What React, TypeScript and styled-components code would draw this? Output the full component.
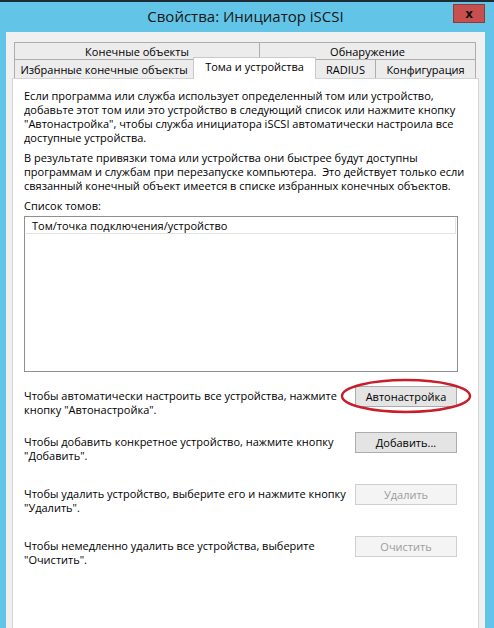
import React from "react";
import styled, { createGlobalStyle } from "styled-components";

const Global = createGlobalStyle`
  html, body { margin: 0; padding: 0; }
  body {
    background: #62c5e8;
    font-family: "Open Sans", "Noto Sans", "Liberation Sans", sans-serif;
    color: #000;
  }
`;

const Window = styled.div`
  width: 494px;
  height: 628px;
  background: #62c5e8;
  border-top: 2px solid #1c2b36;
  box-sizing: border-box;
  display: flex;
  flex-direction: column;
  overflow: hidden;
`;

const TitleBar = styled.div`
  height: 30px;
  display: grid;
  grid-template-columns: 6px 1fr 9px;
  position: relative;
`;

const Title = styled.div`
  grid-column: 2;
  display: flex;
  align-items: center;
  justify-content: center;
  font-size: 15px;
  color: #151515;
  padding-bottom: 2px;
`;

const CloseButton = styled.div`
  position: absolute;
  right: 9px;
  top: 2px;
  width: 32px;
  height: 19px;
  background: #c7504f;
  border: 1px solid #8e3a3a;
  box-sizing: border-box;
  display: flex;
  align-items: center;
  justify-content: center;
  font-family: "DejaVu Sans", sans-serif;
  font-weight: bold;
  font-size: 12px;
  color: #111;
`;

const Client = styled.div`
  flex: 1;
  margin: 0 9px 0 6px;
  background: #f0f0f0;
  padding: 10px 6px 0 6px;
  display: flex;
  flex-direction: column;
`;

const TabStrip = styled.div`
  margin: 0 3px 0 2px;
  display: flex;
  flex-direction: column;
`;

const TabRow = styled.div<{ $h: number }>`
  display: flex;
  height: ${(p) => p.$h}px;
`;

const Tab = styled.div<{ $w: number; $active?: boolean }>`
  width: ${(p) => p.$w}px;
  box-sizing: border-box;
  border: 1px solid #adadad;
  border-left-width: 0;
  &:first-child { border-left-width: 1px; }
  border-bottom: none;
  background: ${(p) => (p.$active ? "#ffffff" : "#ececec")};
  font-size: 11px;
  display: flex;
  align-items: center;
  justify-content: center;
  white-space: nowrap;
  ${(p) =>
    p.$active
      ? `
    margin-top: -2px;
    height: calc(100% + 3px);
    border-left-width: 1px;
    border-color: #c9c9c9;
    margin-left: -1px;
    width: ${p.$w + 1}px;
    position: relative;
    z-index: 2;
    padding-bottom: 4px;
  `
      : ""}
`;

const Panel = styled.div`
  flex: 1;
  background: #ffffff;
  border: 1px solid #d4d4d4;
  border-bottom: none;
  padding: 10px 20px 0 11px;
  font-size: 11px;
  line-height: 14px;
  position: relative;
  z-index: 1;
`;

const Para = styled.p<{ $mt?: number }>`
  margin: ${(p) => p.$mt ?? 0}px 0 0 0;
  white-space: nowrap;
`;

const ListBox = styled.div`
  margin-top: 3px;
  height: 156px;
  border: 1px solid #8f8f8f;
  box-sizing: border-box;
  padding: 1px;
`;

const ListHeader = styled.div`
  height: 16px;
  border: 1px solid #e3e3e3;
  border-top: none;
  border-left: none;
  box-sizing: border-box;
  padding-left: 6px;
  display: flex;
  align-items: center;
  background: #fff;
`;

const ActionRow = styled.div<{ $mt: number }>`
  margin-top: ${(p) => p.$mt}px;
  display: flex;
  justify-content: space-between;
  align-items: flex-start;
`;

const ActionText = styled.div`
  padding-top: 3px;
  line-height: 14px;
  white-space: nowrap;
`;

const ButtonWrap = styled.div`
  position: relative;
  margin-right: 1px;
`;

const Button = styled.div<{ $disabled?: boolean }>`
  width: 102px;
  height: 21px;
  box-sizing: border-box;
  border: 1px solid ${(p) => (p.$disabled ? "#cfcfcf" : "#acacac")};
  background: ${(p) => (p.$disabled ? "#f4f4f4" : "#e4e4e4")};
  color: ${(p) => (p.$disabled ? "#9c9c9c" : "#000")};
  display: flex;
  align-items: center;
  justify-content: center;
  font-size: 11px;
`;

const Ellipse = styled.svg`
  position: absolute;
  left: -16px;
  top: -9px;
  pointer-events: none;
`;

export default function App() {
  return (
    <>
      <Global />
      <Window>
        <TitleBar>
          <Title>Свойства: Инициатор iSCSI</Title>
          <CloseButton>x</CloseButton>
        </TitleBar>
        <Client>
          <TabStrip>
            <TabRow $h={17}>
              <Tab $w={246}>Конечные объекты</Tab>
              <Tab $w={216}>Обнаружение</Tab>
            </TabRow>
            <TabRow $h={19}>
              <Tab $w={180}>Избранные конечные объекты</Tab>
              <Tab $w={122} $active>
                Тома и устройства
              </Tab>
              <Tab $w={60}>RADIUS</Tab>
              <Tab $w={100}>Конфигурация</Tab>
            </TabRow>
          </TabStrip>
          <Panel>
            <Para>
              Если программа или служба использует определенный том или устройство,
              <br />
              добавьте этот том или это устройство в следующий список или нажмите кнопку
              <br />
              "Автонастройка", чтобы служба инициатора iSCSI автоматически настроила все
              <br />
              доступные устройства.
            </Para>
            <Para $mt={6}>
              В результате привязки тома или устройства они быстрее будут доступны
              <br />
              программам и службам при перезапуске компьютера.&nbsp; Это действует только если
              <br />
              связанный конечный объект имеется в списке избранных конечных объектов.
            </Para>
            <Para $mt={6}>Список томов:</Para>
            <ListBox>
              <ListHeader>Том/точка подключения/устройство</ListHeader>
            </ListBox>
            <ActionRow $mt={14}>
              <ActionText>
                Чтобы автоматически настроить все устройства, нажмите
                <br />
                кнопку "Автонастройка".
              </ActionText>
              <ButtonWrap>
                <Button>Автонастройка</Button>
                <Ellipse width="134" height="38" viewBox="0 0 134 38">
                  <ellipse cx="67" cy="19" rx="64" ry="16" fill="none" stroke="#c81e2c" strokeWidth="2.5" />
                </Ellipse>
              </ButtonWrap>
            </ActionRow>
            <ActionRow $mt={15}>
              <ActionText>
                Чтобы добавить конкретное устройство, нажмите кнопку
                <br />
                "Добавить".
              </ActionText>
              <ButtonWrap>
                <Button>Добавить...</Button>
              </ButtonWrap>
            </ActionRow>
            <ActionRow $mt={21}>
              <ActionText>
                Чтобы удалить устройство, выберите его и нажмите кнопку
                <br />
                "Удалить".
              </ActionText>
              <ButtonWrap>
                <Button $disabled>Удалить</Button>
              </ButtonWrap>
            </ActionRow>
            <ActionRow $mt={21}>
              <ActionText>
                Чтобы немедленно удалить все устройства, выберите
                <br />
                "Очистить".
              </ActionText>
              <ButtonWrap>
                <Button $disabled>Очистить</Button>
              </ButtonWrap>
            </ActionRow>
          </Panel>
        </Client>
      </Window>
    </>
  );
}
